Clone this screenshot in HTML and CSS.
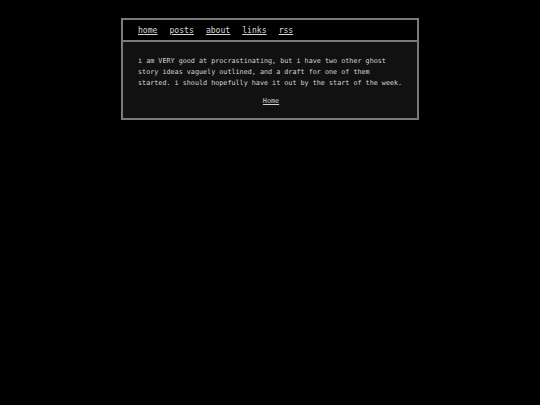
FILE: index.html
```html
<!DOCTYPE html>
<html>
<head>
<meta charset="utf-8">
<link rel="stylesheet" href="styles.css">
</head>
<body>
<div class="box">
  <nav class="nav">
    <a href="#">home</a>
    <a href="#">posts</a>
    <a href="#">about</a>
    <a href="#">links</a>
    <a href="#">rss</a>
  </nav>
  <main class="content">
    <p class="text">i am VERY good at procrastinating, but i have two other ghost story ideas vaguely outlined, and a draft for one of them started. i should hopefully have it out by the start of the week.</p>
    <p class="back"><a href="#">Home</a></p>
  </main>
</div>
</body>
</html>
```
FILE: styles.css
```css
html, body {
  margin: 0;
  padding: 0;
  background: #000;
}
body {
  font-family: "DejaVu Sans Mono", monospace;
  color: #d4d4d4;
  padding-top: 18px;
}
.box {
  width: 294px;
  margin: 0 auto;
  border: 2px solid #7a7a7a;
  background: #111;
}
.nav {
  background: #000;
  border-bottom: 2px solid #7a7a7a;
  height: 20px;
  padding-left: 15px;
  display: flex;
  align-items: center;
  gap: 12px;
  font-size: 8.1px;
}
.nav a {
  color: #d8d8d8;
  text-decoration: underline;
}
.content {
  padding: 14px 13px 11px 15px;
}
.text {
  margin: 0;
  font-size: 6.75px;
  line-height: 11px;
}
.back {
  margin: 7px 0 0 0;
  text-align: center;
  font-size: 6.75px;
  line-height: 11px;
}
.back a {
  color: #d0d0d0;
}
```
